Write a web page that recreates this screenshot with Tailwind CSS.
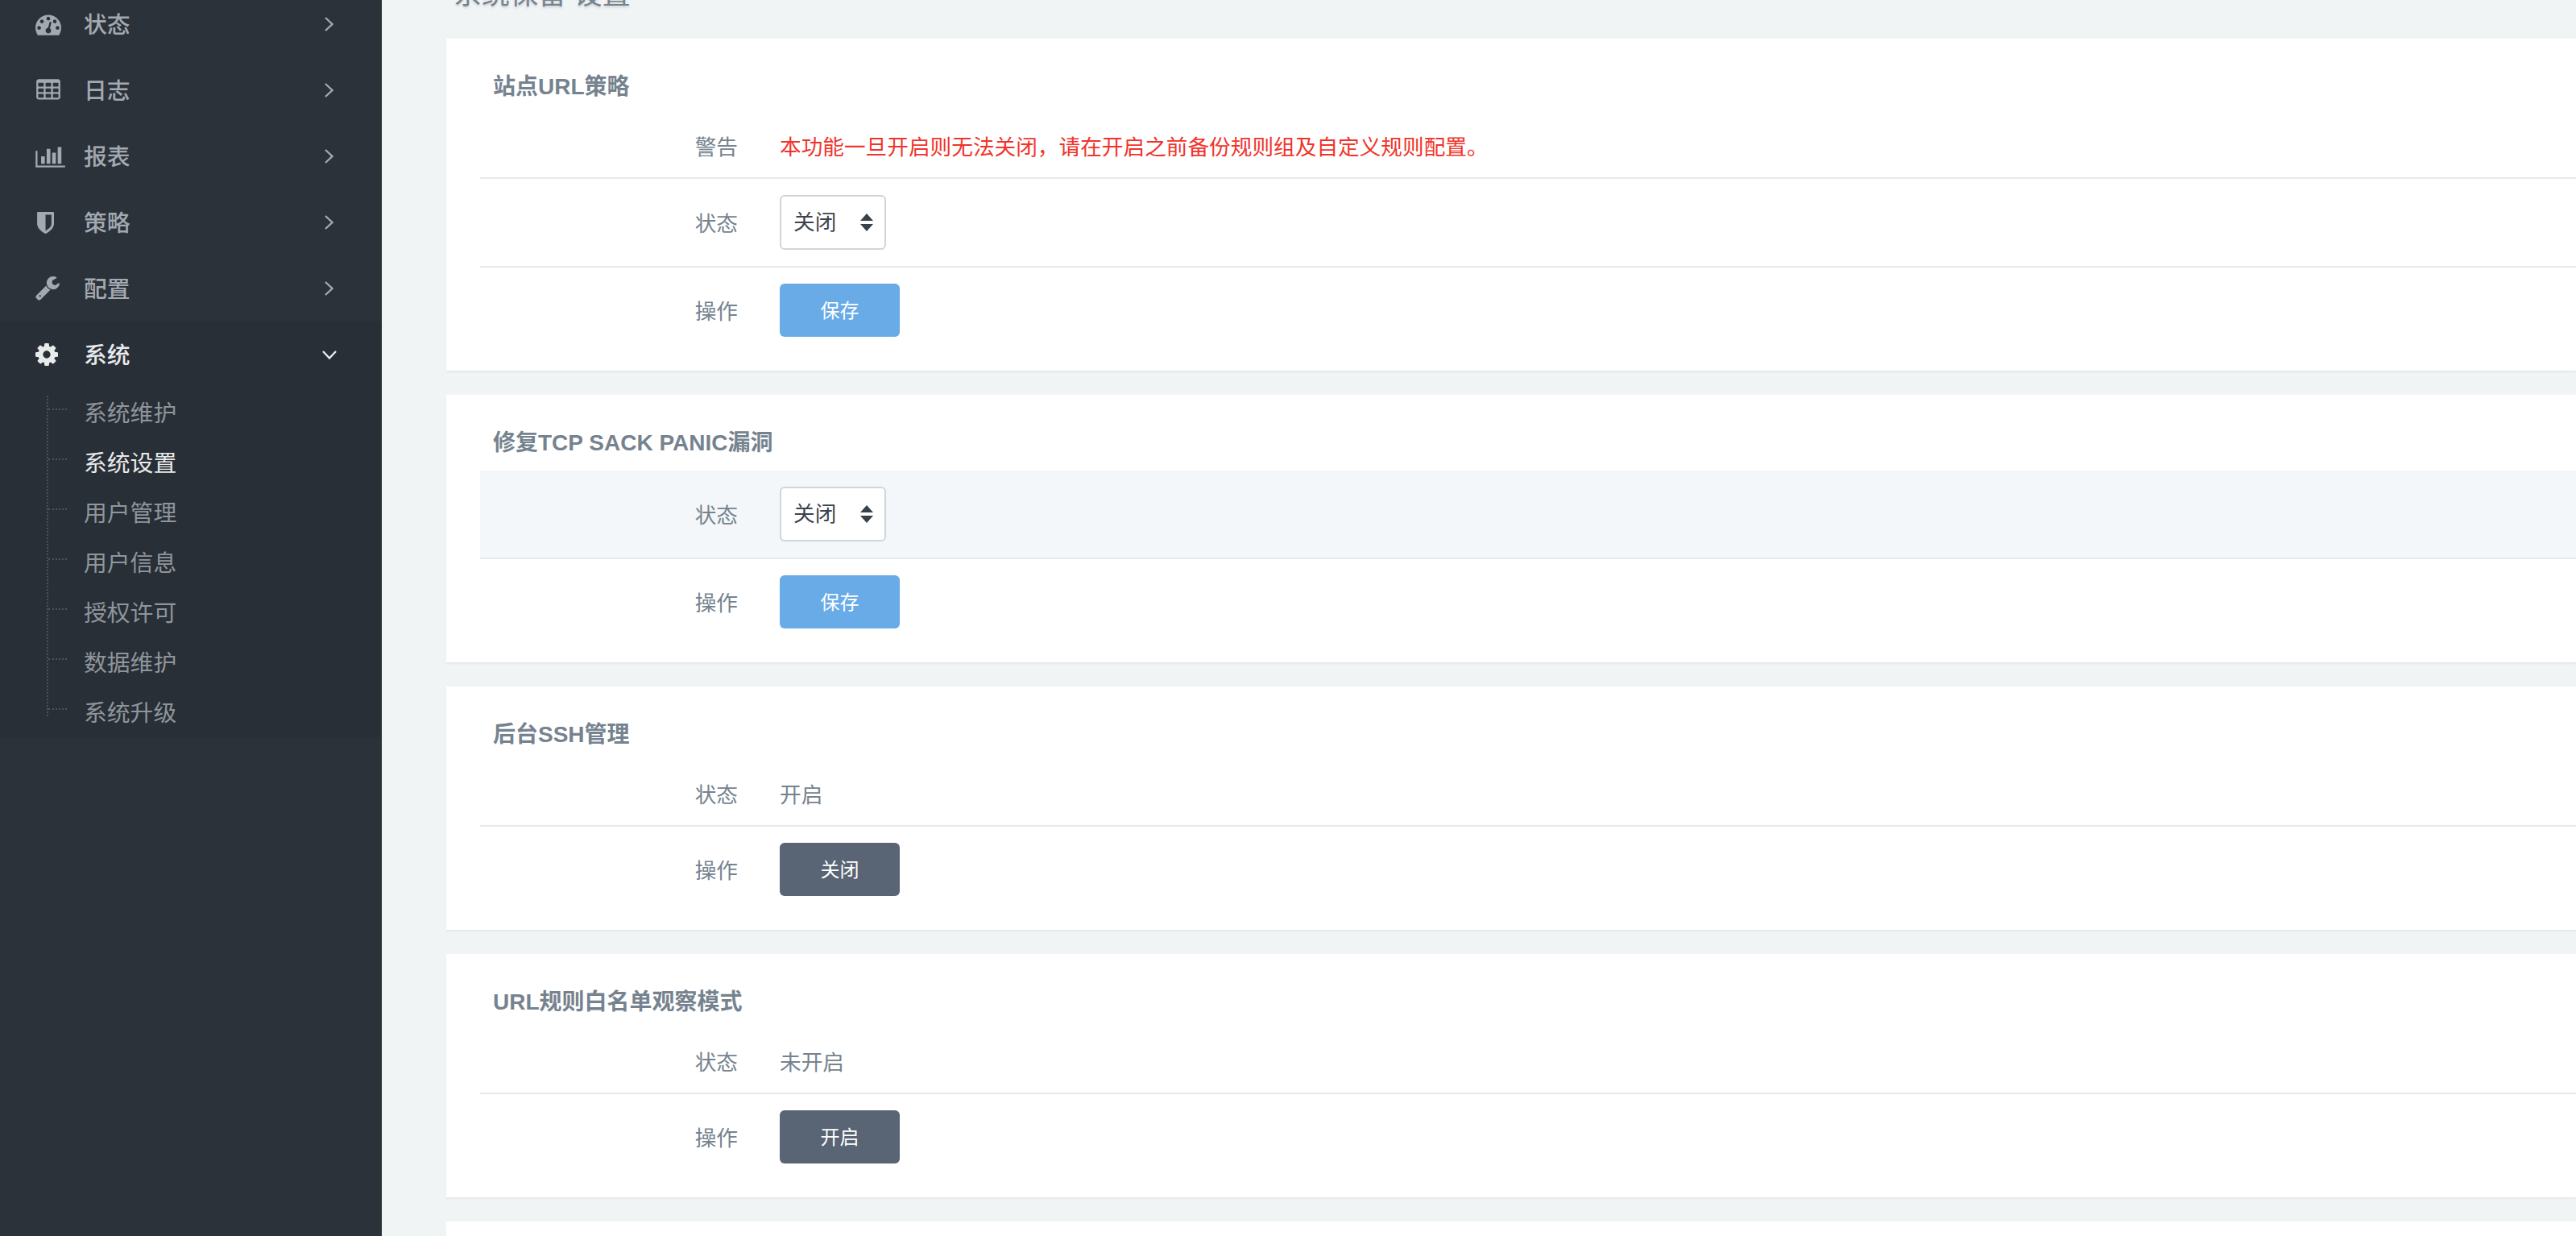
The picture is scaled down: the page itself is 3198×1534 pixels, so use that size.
<!DOCTYPE html>
<html lang="zh-CN">
<head>
<meta charset="utf-8">
<title>系统设置</title>
<script src="https://cdn.jsdelivr.net/npm/@tailwindcss/browser@4"></script>
</head>
<body class="m-0 w-[3198px] h-[1534px] overflow-hidden bg-[#f1f4f5] font-['Liberation_Sans','Noto_Sans_CJK_SC',sans-serif] text-[26.67px] text-[#76838f]">
<div class="flex h-[1534px] overflow-hidden">
  <!-- sidebar -->
  <aside class="w-[474px] h-full shrink-0 bg-[#2b3239] text-[28.8px] text-[#a3a9b1] overflow-hidden">
    <ul class="-mt-[11px]">
      <li class="flex items-center h-[82px] pl-[44px] pr-[60px]">
        <span class="w-[60px] flex"><svg class="w-[32px] h-[32px] fill-current" viewBox="0 0 1792 1792"><path d="M384 1152q0-53-37.5-90.5t-90.5-37.5-90.5 37.5-37.5 90.5 37.5 90.5 90.5 37.5 90.5-37.5 37.5-90.5zm192-448q0-53-37.5-90.5t-90.5-37.5-90.5 37.5-37.5 90.5 37.5 90.5 90.5 37.5 90.5-37.5 37.5-90.5zm428 481l101-382q6-26-7.5-48.5t-38.5-29.5-48 6.5-30 39.5l-101 382q-60 5-107 43.5t-63 98.5q-20 77 20 146t117 89 146-20 89-117q16-60-6-117t-72-91zm660-33q0-53-37.5-90.5t-90.5-37.5-90.5 37.5-37.5 90.5 37.5 90.5 90.5 37.5 90.5-37.5 37.5-90.5zm-640-640q0-53-37.5-90.5t-90.5-37.5-90.5 37.5-37.5 90.5 37.5 90.5 90.5 37.5 90.5-37.5 37.5-90.5zm448 192q0-53-37.5-90.5t-90.5-37.5-90.5 37.5-37.5 90.5 37.5 90.5 90.5 37.5 90.5-37.5 37.5-90.5zm320 448q0 261-141 483-19 29-54 29h-1402q-35 0-54-29-141-221-141-483 0-182 71-348t191-286 286-191 348-71 348 71 286 191 191 286 71 348z"/></svg></span>
        <span class="flex-1 pt-[4px] font-medium">状态</span>
        <svg class="w-[11px] h-[18px] fill-none stroke-current stroke-[2.4]" viewBox="0 0 11 18"><path d="M1 1l8.5 8-8.5 8"/></svg>
      </li>
      <li class="flex items-center h-[82px] pl-[44px] pr-[60px]">
        <span class="w-[60px] flex"><svg class="w-[32px] h-[32px] fill-current" viewBox="0 0 1792 1792"><path d="M576 1376v-192q0-14-9-23t-23-9h-320q-14 0-23 9t-9 23v192q0 14 9 23t23 9h320q14 0 23-9t9-23zm0-384v-192q0-14-9-23t-23-9h-320q-14 0-23 9t-9 23v192q0 14 9 23t23 9h320q14 0 23-9t9-23zm512 384v-192q0-14-9-23t-23-9h-320q-14 0-23 9t-9 23v192q0 14 9 23t23 9h320q14 0 23-9t9-23zm-512-768v-192q0-14-9-23t-23-9h-320q-14 0-23 9t-9 23v192q0 14 9 23t23 9h320q14 0 23-9t9-23zm512 384v-192q0-14-9-23t-23-9h-320q-14 0-23 9t-9 23v192q0 14 9 23t23 9h320q14 0 23-9t9-23zm512 384v-192q0-14-9-23t-23-9h-320q-14 0-23 9t-9 23v192q0 14 9 23t23 9h320q14 0 23-9t9-23zm-512-768v-192q0-14-9-23t-23-9h-320q-14 0-23 9t-9 23v192q0 14 9 23t23 9h320q14 0 23-9t9-23zm512 384v-192q0-14-9-23t-23-9h-320q-14 0-23 9t-9 23v192q0 14 9 23t23 9h320q14 0 23-9t9-23zm0-384v-192q0-14-9-23t-23-9h-320q-14 0-23 9t-9 23v192q0 14 9 23t23 9h320q14 0 23-9t9-23zm128-320v1088q0 66-47 113t-113 47h-1344q-66 0-113-47t-47-113v-1088q0-66 47-113t113-47h1344q66 0 113 47t47 113z"/></svg></span>
        <span class="flex-1 pt-[4px] font-medium">日志</span>
        <svg class="w-[11px] h-[18px] fill-none stroke-current stroke-[2.4]" viewBox="0 0 11 18"><path d="M1 1l8.5 8-8.5 8"/></svg>
      </li>
      <li class="flex items-center h-[82px] pl-[44px] pr-[60px]">
        <span class="w-[60px] flex"><svg class="w-[37px] h-[32px] fill-current" viewBox="0 0 2048 1792"><path d="M640 896v512h-256v-512h256zm384-512v1024h-256v-1024h256zm1024 1152v128h-2048v-1152h128v1024h1920zm-640-896v768h-256v-768h256zm384-384v1152h-256v-1152h256z"/></svg></span>
        <span class="flex-1 pt-[4px] font-medium">报表</span>
        <svg class="w-[11px] h-[18px] fill-none stroke-current stroke-[2.4]" viewBox="0 0 11 18"><path d="M1 1l8.5 8-8.5 8"/></svg>
      </li>
      <li class="flex items-center h-[82px] pl-[44px] pr-[60px]">
        <span class="w-[60px] flex"><svg class="w-[23px] h-[27px] fill-current" viewBox="128 128 1408 1536" preserveAspectRatio="none"><path d="M1344 960v-640h-448v1137q119-63 213-137 235-184 235-360zm192-768v768q0 86-33.5 170.5t-83 150-118 127.5-126.5 103-121 77.5-89.5 49.5-42.5 20q-12 6-26 6t-26-6q-16-7-42.5-20t-89.5-49.5-121-77.5-126.5-103-118-127.5-83-150-33.5-170.5v-768q0-26 19-45t45-19h1152q26 0 45 19t19 45z"/></svg></span>
        <span class="flex-1 pt-[4px] font-medium">策略</span>
        <svg class="w-[11px] h-[18px] fill-none stroke-current stroke-[2.4]" viewBox="0 0 11 18"><path d="M1 1l8.5 8-8.5 8"/></svg>
      </li>
      <li class="flex items-center h-[82px] pl-[44px] pr-[60px]">
        <span class="w-[60px] flex"><svg class="w-[30px] h-[30px] fill-current" viewBox="64 128 1664 1664"><path d="M448 1472q0-26-19-45t-45-19-45 19-19 45 19 45 45 19 45-19 19-45zm644-420l-682 682q-37 37-90 37-52 0-91-37l-106-108q-38-36-38-90 0-53 38-91l681-681q39 98 114.5 173.5t173.5 114.5zm634-435q0 39-23 106-47 134-164.5 217.5t-258.5 83.5q-185 0-316.5-131.5t-131.5-316.5 131.5-316.5 316.5-131.5q58 0 121.5 16.5t107.5 46.5q16 11 16 28t-16 28l-293 169v224l193 107q5-3 79-48.5t135.5-81 70.5-35.5q15 0 23.5 10t8.5 25z"/></svg></span>
        <span class="flex-1 pt-[4px] font-medium">配置</span>
        <svg class="w-[11px] h-[18px] fill-none stroke-current stroke-[2.4]" viewBox="0 0 11 18"><path d="M1 1l8.5 8-8.5 8"/></svg>
      </li>
      <li class="bg-[#282f36]">
        <div class="flex items-center h-[82px] pl-[44px] pr-[56px] text-[#e8eaec]">
          <span class="w-[60px] flex"><svg class="w-[28px] h-[28px] fill-current" viewBox="128 128 1536 1536"><path d="M1152 896q0-106-75-181t-181-75-181 75-75 181 75 181 181 75 181-75 75-181zm512-109v222q0 12-8 23t-20 13l-185 28q-19 54-39 91 35 50 107 138 10 12 10 25t-9 23q-27 37-99 108t-94 71q-12 0-26-9l-138-108q-44 23-91 38-16 136-29 186-7 28-36 28h-222q-14 0-24.5-8.5t-11.5-21.5l-28-184q-49-16-90-37l-141 107q-10 9-25 9-14 0-25-11-126-114-165-168-7-10-7-23 0-12 8-23 15-21 51-66.5t54-70.5q-27-50-41-99l-183-27q-13-2-21-12.5t-8-23.5v-222q0-12 8-23t19-13l186-28q14-46 39-92-40-57-107-138-10-12-10-24 0-10 9-23 26-36 98.5-107.5t94.5-71.5q13 0 26 10l138 107q44-23 91-38 16-136 29-186 7-28 36-28h222q14 0 24.5 8.5t11.5 21.5l28 184q49 16 90 37l142-107q9-9 24-9 13 0 25 10 129 119 165 170 7 8 7 22 0 12-8 23-15 21-51 66.5t-54 70.5q26 50 41 98l183 28q13 2 21 12.5t8 23.5z"/></svg></span>
          <span class="flex-1 pt-[4px] font-medium">系统</span>
          <svg class="w-[18px] h-[11px] fill-none stroke-current stroke-[2.4]" viewBox="0 0 18 11"><path d="M1 1l8 8.5 8-8.5"/></svg>
        </div>
        <ul class="relative text-[#8f959c]">
          <span class="absolute left-[58px] top-[10px] h-[398px] border-l-2 border-dotted border-[#4c535b]"></span>
          <li class="relative h-[62px] pl-[104px] pt-[4px] flex items-center"><span class="absolute left-[60px] top-[26px] w-[23px] border-t-2 border-dotted border-[#4c535b]"></span>系统维护</li>
          <li class="relative h-[62px] pl-[104px] pt-[4px] flex items-center text-[#e8eaec]"><span class="absolute left-[60px] top-[26px] w-[23px] border-t-2 border-dotted border-[#4c535b]"></span>系统设置</li>
          <li class="relative h-[62px] pl-[104px] pt-[4px] flex items-center"><span class="absolute left-[60px] top-[26px] w-[23px] border-t-2 border-dotted border-[#4c535b]"></span>用户管理</li>
          <li class="relative h-[62px] pl-[104px] pt-[4px] flex items-center"><span class="absolute left-[60px] top-[26px] w-[23px] border-t-2 border-dotted border-[#4c535b]"></span>用户信息</li>
          <li class="relative h-[62px] pl-[104px] pt-[4px] flex items-center"><span class="absolute left-[60px] top-[26px] w-[23px] border-t-2 border-dotted border-[#4c535b]"></span>授权许可</li>
          <li class="relative h-[62px] pl-[104px] pt-[4px] flex items-center"><span class="absolute left-[60px] top-[26px] w-[23px] border-t-2 border-dotted border-[#4c535b]"></span>数据维护</li>
          <li class="relative h-[62px] pl-[104px] pt-[4px] flex items-center"><span class="absolute left-[60px] top-[26px] w-[23px] border-t-2 border-dotted border-[#4c535b]"></span>系统升级</li>
        </ul>
      </li>
    </ul>
  </aside>

  <!-- content -->
  <main class="flex-1 pl-[80px] min-w-0">
    <h1 class="-mt-[27px] h-[40px] mb-[35px] pl-[9px] text-[35px] leading-[40px] font-normal [text-shadow:rgba(0,0,0,0.15)_0_2px_3px]">系统保留 设置</h1>

    <section class="bg-white pl-[42px] pb-[22px] mb-[30px] shadow-[0_2px_2px_rgba(0,0,0,0.05)]">
      <h3 class="h-[94px] pl-[16px] pt-[30px] text-[28px] leading-[60px] font-bold">站点URL策略</h3>
      <div class="flex items-center h-[80px] border-b-2 border-[#e4eaec]">
        <div class="w-[320px] pt-[4px] text-right">警告</div>
        <div class="ml-[52px] pt-[4px] text-[#f2332b]">本功能一旦开启则无法关闭，请在开启之前备份规则组及自定义规则配置。</div>
      </div>
      <div class="flex items-center h-[110px] border-b-2 border-[#e4eaec]">
        <div class="w-[320px] pt-[4px] text-right">状态</div>
        <div class="ml-[52px] relative w-[132px] h-[68px]">
          <select class="appearance-none w-full h-full bg-white border-2 border-[#d0d5d9] rounded-[6px] pl-[15px] text-[#3d444c] outline-none"><option>关闭</option></select>
          <svg class="absolute right-[16px] top-[23px] w-[16px] h-[22px] fill-[#3a4047] pointer-events-none" viewBox="0 0 16 22"><path d="M8 0l8 9H0zM0 13h16l-8 9z"/></svg>
        </div>
      </div>
      <div class="flex items-center h-[106px]">
        <div class="w-[320px] pt-[4px] text-right">操作</div>
        <button class="ml-[52px] w-[149px] h-[66px] pt-[2px] rounded-[6px] bg-[#68abe7] text-white text-[24px]">保存</button>
      </div>
    </section>

    <section class="bg-white pl-[42px] pb-[22px] mb-[30px] shadow-[0_2px_2px_rgba(0,0,0,0.05)]">
      <h3 class="h-[94px] pl-[16px] pt-[30px] text-[28px] leading-[60px] font-bold">修复TCP SACK PANIC漏洞</h3>
      <div class="flex items-center h-[110px] border-b-2 border-[#e4eaec] bg-[#f3f7f9]">
        <div class="w-[320px] pt-[4px] text-right">状态</div>
        <div class="ml-[52px] relative w-[132px] h-[68px]">
          <select class="appearance-none w-full h-full bg-white border-2 border-[#d0d5d9] rounded-[6px] pl-[15px] text-[#3d444c] outline-none"><option>关闭</option></select>
          <svg class="absolute right-[16px] top-[23px] w-[16px] h-[22px] fill-[#3a4047] pointer-events-none" viewBox="0 0 16 22"><path d="M8 0l8 9H0zM0 13h16l-8 9z"/></svg>
        </div>
      </div>
      <div class="flex items-center h-[106px]">
        <div class="w-[320px] pt-[4px] text-right">操作</div>
        <button class="ml-[52px] w-[149px] h-[66px] pt-[2px] rounded-[6px] bg-[#68abe7] text-white text-[24px]">保存</button>
      </div>
    </section>

    <section class="bg-white pl-[42px] pb-[22px] mb-[30px] shadow-[0_2px_2px_rgba(0,0,0,0.05)]">
      <h3 class="h-[94px] pl-[16px] pt-[30px] text-[28px] leading-[60px] font-bold">后台SSH管理</h3>
      <div class="flex items-center h-[80px] border-b-2 border-[#e4eaec]">
        <div class="w-[320px] pt-[4px] text-right">状态</div>
        <div class="ml-[52px] pt-[4px]">开启</div>
      </div>
      <div class="flex items-center h-[106px]">
        <div class="w-[320px] pt-[4px] text-right">操作</div>
        <button class="ml-[52px] w-[149px] h-[66px] pt-[2px] rounded-[6px] bg-[#596474] text-white text-[24px]">关闭</button>
      </div>
    </section>

    <section class="bg-white pl-[42px] pb-[22px] mb-[30px] shadow-[0_2px_2px_rgba(0,0,0,0.05)]">
      <h3 class="h-[94px] pl-[16px] pt-[30px] text-[28px] leading-[60px] font-bold">URL规则白名单观察模式</h3>
      <div class="flex items-center h-[80px] border-b-2 border-[#e4eaec]">
        <div class="w-[320px] pt-[4px] text-right">状态</div>
        <div class="ml-[52px] pt-[4px]">未开启</div>
      </div>
      <div class="flex items-center h-[106px]">
        <div class="w-[320px] pt-[4px] text-right">操作</div>
        <button class="ml-[52px] w-[149px] h-[66px] pt-[2px] rounded-[6px] bg-[#596474] text-white text-[24px]">开启</button>
      </div>
    </section>

    <section class="bg-white h-[100px]"></section>
  </main>
</div>
</body>
</html>
